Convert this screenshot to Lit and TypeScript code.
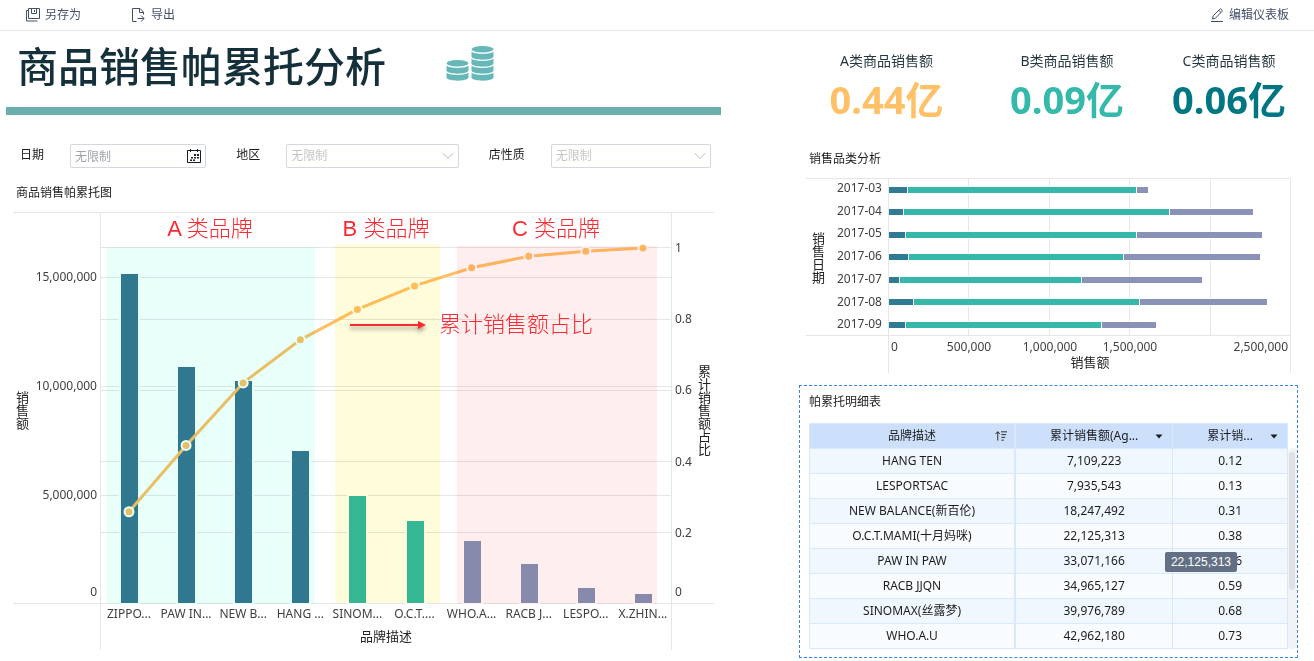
import { LitElement, html, svg, css } from "lit";
import { customElement, property } from "lit/decorators.js";
import { classMap } from "lit/directives/class-map.js";

const baseText = css`
  :host {
    display: block;
    box-sizing: border-box;
    font-family: "Noto Sans", "Noto Sans CJK SC", sans-serif;
    font-size: 12px;
    line-height: 16px;
    color: #1c1c1c;
  }
  * {
    box-sizing: border-box;
  }
  svg {
    display: block;
  }
`;

const chartText = css`
  .chart {
    width: 100%;
    height: auto;
  }
  .grid {
    stroke: #e6e6e6;
    stroke-width: 1;
    shape-rendering: crispEdges;
  }
  .tick {
    font-size: 12px;
    fill: #404040;
  }
  .axis-title {
    font-size: 13px;
    fill: #222;
  }
  .end {
    text-anchor: end;
  }
  .middle {
    text-anchor: middle;
  }
  .vertical {
    writing-mode: vertical-rl;
    text-anchor: middle;
  }
`;

type Brand = { label: string; sales: number; kind: "a" | "b" | "c" };

const brands: Brand[] = [
  { label: "ZIPPO...", sales: 15220000, kind: "a" },
  { label: "PAW IN...", sales: 10945853, kind: "a" },
  { label: "NEW B...", sales: 10311949, kind: "a" },
  { label: "HANG ...", sales: 7109223, kind: "a" },
  { label: "SINOM...", sales: 5011662, kind: "b" },
  { label: "O.C.T....", sales: 3877821, kind: "b" },
  { label: "WHO.A...", sales: 2985391, kind: "c" },
  { label: "RACB J...", sales: 1893961, kind: "c" },
  { label: "LESPO...", sales: 826320, kind: "c" },
  { label: "X.ZHIN...", sales: 550000, kind: "c" },
];

/* Bars for each brand with the running share of total sales above them. */
@customElement("pareto-chart")
class ParetoChart extends LitElement {
  @property({ attribute: false }) data: Brand[] = [];

  static styles = [
    baseText,
    chartText,
    css`
      .bar {
        stroke: #fff;
        stroke-width: 2;
      }
      .bar.a {
        fill: #337892;
      }
      .bar.b {
        fill: #34b9aa;
      }
      .bar.c {
        fill: #8894b8;
      }
      .share {
        fill: none;
        stroke: #ffbf66;
        stroke-width: 3;
      }
      .dot {
        fill: #ffbf66;
        stroke: #fff;
        stroke-width: 2;
      }
      .zone {
        mix-blend-mode: multiply;
      }
      .zone.a {
        fill: #e8fffa;
      }
      .zone.b {
        fill: #fffcdb;
      }
      .zone.c {
        fill: #ffeeee;
      }
      .note {
        font-family: "Liberation Sans", "Noto Sans CJK SC", sans-serif;
        font-size: 22px;
        font-weight: 300;
        fill: #fb2a32;
      }
      .arrow {
        fill: #fb2a32;
        filter: drop-shadow(0 3px 2px rgba(0, 0, 0, 0.4));
      }
    `,
  ];

  render() {
    const left = 95;
    const base = 392;
    const step = 57.1;
    const barY = (v: number) => base - (v / 5000000) * 109;
    const shareY = (v: number) => base - v * 356;
    const total = this.data.reduce((s, d) => s + d.sales, 0);
    let sum = 0;
    const points = this.data.map((d, i) => {
      sum += d.sales;
      return [left + 28 + i * step, shareY(sum / total)];
    });
    const line = (y: number) =>
      svg`<line class="grid" x1="95" x2="665" y1=${Math.round(y) + 0.5} y2=${Math.round(y) + 0.5}></line>`;

    return html`<svg class="chart" viewBox="0 0 715 445" role="img" aria-label="商品销售帕累托图">
      ${[5, 10, 15].map((m) => line(barY(m * 1000000)))}
      ${[0.2, 0.4, 0.6, 0.8, 1].map((v) => line(shareY(v) - 0.6))}
      <path class="grid" d="M7 .5H708M7 391.5H708M94.500 0V438M665.500 0V438" fill="none"></path>
      ${this.data.map((d, i) => {
        const y = Math.round(barY(d.sales) + 0.6);
        return svg`<rect class="bar ${d.kind}" x=${Math.round(left + 19 + i * step)} y=${y}
          width="19" height=${base - y}></rect>`;
      })}
      <polyline class="share" points=${points.map((p) => p.join(",")).join(" ")}></polyline>
      ${points.map((p) => svg`<circle class="dot" cx=${p[0]} cy=${p[1]} r="4.5"></circle>`)}
      <rect class="zone a" x="101" y="35" width="208" height="357"></rect>
      <rect class="zone b" x="329" y="32" width="105" height="359"></rect>
      <rect class="zone c" x="451" y="34" width="200" height="358"></rect>

      ${[0, 5000000, 10000000, 15000000].map(
        (v) => svg`<text class="tick end" x="91" y=${v ? barY(v) : 380} dy="4">${v.toLocaleString("en-US")}</text>`
      )}
      ${[0, 0.2, 0.4, 0.6, 0.8, 1].map(
        (v) => svg`<text class="tick" x="669" y=${v ? shareY(v) : 380} dy="4">${v}</text>`
      )}
      ${this.data.map(
        (d, i) => svg`<text class="tick middle" x=${left + 28 + i * step} y="406">${d.label}</text>`
      )}
      <text class="axis-title middle" x="380" y="429">品牌描述</text>
      <text class="axis-title vertical" x="16" y="198">销售额</text>
      <text class="axis-title vertical" x="698" y="198">累计销售额占比</text>

      <text class="note middle" x="204" y="24">A 类品牌</text>
      <text class="note middle" x="380" y="24">B 类品牌</text>
      <text class="note middle" x="550" y="24">C 类品牌</text>
      <text class="note" x="433" y="120">累计销售额占比</text>
      <path class="arrow" d="M344 112H412V109L420 113L412 117V114H344Z"></path>
    </svg>`;
  }
}

type Month = { label: string; parts: number[] };

const months: Month[] = [
  { label: "2017-03", parts: [119000, 1414000, 76000] },
  { label: "2017-04", parts: [94000, 1645000, 527000] },
  { label: "2017-05", parts: [106000, 1428000, 788000] },
  { label: "2017-06", parts: [125000, 1330000, 854000] },
  { label: "2017-07", parts: [68000, 1127000, 753000] },
  { label: "2017-08", parts: [156000, 1396000, 801000] },
  { label: "2017-09", parts: [106000, 1212000, 340000] },
];

/* Stacked horizontal bars, one row for each month. */
@customElement("category-chart")
class CategoryChart extends LitElement {
  @property({ attribute: false }) data: Month[] = [];

  static styles = [
    baseText,
    chartText,
    css`
      .gap {
        fill: #fff;
      }
      .p0 {
        fill: #317a93;
      }
      .p1 {
        fill: #35b8aa;
      }
      .p2 {
        fill: #8b92b8;
      }
    `,
  ];

  render() {
    const left = 90;
    const x = (v: number) => Math.round(left + (v / 500000) * 80.4);
    const row = (i: number) => 9 + Math.round(i * 22.5 - 0.1);
    return html`<svg class="chart" viewBox="0 0 499 197" role="img" aria-label="销售品类分析">
      ${[1, 2, 3, 4].map(
        (n) => svg`<line class="grid" x1=${x(n * 500000) - 0.5} x2=${x(n * 500000) - 0.5} y1="0" y2="157"></line>`
      )}
      <path class="grid" d="M7 .5H492M7 157.500H492M89.500 0V195M491.500 0V195" fill="none"></path>
      ${this.data.map((d, i) => {
        let sum = 0;
        const y = row(i);
        return svg`
          <rect class="gap" x=${left} y=${y - 1} width=${x(d.parts.reduce((a, b) => a + b)) - left + 1} height="8"></rect>
          ${d.parts.map((p, k) => {
            const start = x(sum) + (k === 2 ? 1 : 0);
            sum += p;
            const stop = x(sum) - (k === 0 ? 1 : 0);
            return svg`<rect class="p${k}" x=${start} y=${y} width=${stop - start} height="6"></rect>`;
          })}
          <text class="tick end" x="83" y=${14 + Math.round(i * 22.7)}>${d.label}</text>`;
      })}
      <text class="tick" x="92" y="173">0</text>
      ${[500000, 1000000, 1500000].map(
        (v) => svg`<text class="tick middle" x=${x(v)} y="173">${v.toLocaleString("en-US")}</text>`
      )}
      <text class="tick end" x="489" y="173">2,500,000</text>
      <text class="axis-title middle" x="291" y="189">销售额</text>
      <text class="axis-title vertical" x="19" y="80">销售日期</text>
    </svg>`;
  }
}

const rows = [
  ["HANG TEN", "7,109,223", "0.12"],
  ["LESPORTSAC", "7,935,543", "0.13"],
  ["NEW BALANCE(新百伦)", "18,247,492", "0.31"],
  ["O.C.T.MAMI(十月妈咪)", "22,125,313", "0.38"],
  ["PAW IN PAW", "33,071,166", "0.56"],
  ["RACB JJQN", "34,965,127", "0.59"],
  ["SINOMAX(丝露梦)", "39,976,789", "0.68"],
  ["WHO.A.U", "42,962,180", "0.73"],
];

/* Brand table in its selected frame, with a scroll bar and a value tooltip. */
@customElement("detail-table")
class DetailTable extends LitElement {
  static styles = [
    baseText,
    css`
      .panel {
        position: relative;
        border: 1px dashed #3d83e6;
        padding: 8px 0 8px 9px;
      }
      .title {
        margin: 0 0 13px;
        font-size: 12px;
        font-weight: 400;
      }
      .body {
        display: flex;
      }
      .table {
        flex: 1;
        table-layout: fixed;
        border-collapse: collapse;
        text-align: center;
      }
      .c1 {
        width: 43%;
      }
      .c2 {
        width: 33%;
      }
      .c3 {
        width: 24%;
      }
      .cell {
        height: 25px;
        padding: 0;
        border: 1px solid #d8e9fe;
        font-weight: 400;
        white-space: nowrap;
      }
      .first {
        border-right-width: 2px;
      }
      .head {
        background: #cce0fc;
      }
      .row {
        background: #f9fcff;
      }
      .row.odd {
        background: #f1f7fe;
      }
      .head-box {
        display: grid;
        grid-template-columns: 12px 1fr 12px;
        align-items: center;
        padding: 0 7px;
      }
      .tool {
        display: flex;
        justify-content: center;
        padding: 0;
        border: 0;
        background: none;
        color: inherit;
      }
      .track {
        width: 9px;
        margin-top: 25px;
        padding: 4px 2px 0 1px;
        border-radius: 4px;
        background: #f2f3f4;
      }
      .thumb {
        height: 138px;
        border-radius: 3px;
        background: #dfe1e4;
      }
      .tip {
        position: absolute;
        top: 166px;
        right: 60px;
        padding: 0 6px;
        border-radius: 2px;
        background: #626f85;
        color: #fff;
        font-family: "Liberation Sans", sans-serif;
        line-height: 20px;
      }
    `,
  ];

  private menu(name: string) {
    return html`<button class="tool" type="button" aria-label=${name}>
      <svg width="8" height="5" viewBox="0 0 8 5"><path d="M.5 .5h7L4 4.500z" fill="currentColor"></path></svg>
    </button>`;
  }

  render() {
    return html`<section class="panel">
      <h2 class="title">帕累托明细表</h2>
      <div class="body">
        <table class="table">
          <colgroup>
            <col class="c1" />
            <col class="c2" />
            <col class="c3" />
          </colgroup>
          <thead>
            <tr class="head">
              <th class="cell first" scope="col">
                <div class="head-box">
                  <span></span><span>品牌描述</span>
                  <button class="tool" type="button" aria-label="排序">
                    <svg width="13" height="12" viewBox="0 0 13 12" fill="none" stroke="currentColor">
                      <path d="M3 11V1.500M.6 4L3 1.300L5.400 4M6.500 1.500H13M7 4.500H12M7 7.500H11M7 10.500H9.500"></path>
                    </svg>
                  </button>
                </div>
              </th>
              <th class="cell" scope="col">
                <div class="head-box"><span></span><span>累计销售额(Ag...</span>${this.menu("累计销售额")}</div>
              </th>
              <th class="cell" scope="col">
                <div class="head-box"><span></span><span>累计销...</span>${this.menu("累计销售额占比")}</div>
              </th>
            </tr>
          </thead>
          <tbody>
            ${rows.map(
              (r, i) => html`<tr class=${classMap({ row: true, odd: i % 2 === 0 })}>
                <td class="cell first">${r[0]}</td>
                <td class="cell">${r[1]}</td>
                <td class="cell">${r[2]}</td>
              </tr>`
            )}
          </tbody>
        </table>
        <div class="track"><div class="thumb"></div></div>
      </div>
      <div class="tip" role="tooltip">22,125,313</div>
    </section>`;
  }
}

@customElement("app-root")
class AppRoot extends LitElement {
  static styles = [
    baseText,
    css`
      :host {
        background: #fff;
      }
      .bar {
        display: flex;
        align-items: center;
        height: 31px;
        padding: 0 25px 0 25px;
        border-bottom: 1px solid #e8e8e8;
      }
      .action {
        display: flex;
        align-items: center;
        gap: 5px;
        margin-right: 50px;
        padding: 0;
        border: 0;
        background: none;
        font: inherit;
        color: #434f6b;
        cursor: pointer;
      }
      .action.edit {
        margin: 0 0 0 auto;
      }
      .columns {
        display: grid;
        grid-template-columns: 715fr 499fr;
        gap: 78px;
        padding: 0 16px 0 6px;
      }
      .hero {
        display: flex;
        gap: 60px;
        height: 84px;
        padding: 5px 0 0 11px;
        border-bottom: 8px solid #6aafae;
      }
      .name {
        margin: 0;
        font-size: 41px;
        font-weight: 500;
        line-height: 60px;
        color: #15303a;
      }
      .coins {
        margin-top: 10px;
      }
      .filters {
        display: flex;
        align-items: center;
        gap: 30px;
        margin-top: 29px;
        padding: 0 10px 0 14px;
      }
      .filter {
        display: flex;
        align-items: center;
        gap: 26px;
      }
      .filter.date {
        flex: 136 1 50px;
      }
      .filter.area {
        flex: 172 1 50px;
      }
      .filter.shop {
        flex: 160 1 62px;
      }
      .label {
        flex: none;
        margin-bottom: 2px;
      }
      .box {
        display: grid;
        flex: 1;
        align-items: center;
        min-width: 0;
      }
      .box > * {
        grid-area: 1 / 1;
      }
      .field {
        width: 100%;
        height: 24px;
        min-width: 0;
        padding: 0 4px;
        border: 1px solid #d3d8de;
        border-radius: 2px;
        background: #fff;
        font: inherit;
        color: #c6c6c6;
        appearance: none;
      }
      .field::placeholder {
        color: #a0a4aa;
        opacity: 1;
      }
      .glyph {
        justify-self: end;
        margin-right: 5px;
        pointer-events: none;
      }
      .subtitle {
        margin: 17px 10px 11px;
        font-size: 12px;
        font-weight: 400;
      }
      .kpis {
        display: grid;
        grid-template-columns: 175fr 186fr 138fr;
        margin: 20px 0 27px;
        text-align: center;
      }
      .kpi {
        margin: 0;
      }
      .kpi-name {
        font-size: 14px;
        line-height: 20px;
        color: #26383f;
      }
      .kpi-value {
        margin: 3px 0 0;
        font-size: 38px;
        font-weight: 700;
        line-height: 50px;
        white-space: nowrap;
      }
      .kpi-value.a {
        color: #ffc168;
      }
      .kpi-value.b {
        color: #35b9ab;
      }
      .kpi-value.c {
        color: #007682;
      }
      .table {
        margin-top: 10px;
      }
    `,
  ];

  private chevron() {
    return html`<svg class="glyph" width="12" height="8" viewBox="0 0 12 8" fill="none" stroke="#bcc0c4">
      <path d="M.7 1L6 6.500L11.300 1"></path>
    </svg>`;
  }

  private kpi(name: string, value: string, kind: string) {
    return html`<dl class="kpi">
      <dt class="kpi-name">${name}</dt>
      <dd class="kpi-value ${kind}">${value}</dd>
    </dl>`;
  }

  render() {
    return html`
      <header class="bar">
        <button class="action" type="button">
          <svg width="15" height="14" viewBox="0 0 15 14" fill="none" stroke="currentColor">
            <path d="M3.500 .5H14.500V10.500H3.500ZM6.500 .5V5.500H11.500V.5M9.500 2V4M3.500 2.500H1.500V13H12.500"></path>
          </svg>
          另存为
        </button>
        <button class="action" type="button">
          <svg width="15" height="15" viewBox="0 0 15 15" fill="none" stroke="currentColor">
            <path d="M5.500 13.500H1.500V.5H9L12.500 4.200V6.500M8.500 .5V4.500H12.500M6.500 10.500H13M10 7.500L13 10.500L10 13.700"></path>
          </svg>
          导出
        </button>
        <button class="action edit" type="button">
          <svg width="14" height="14" viewBox="0 0 14 14" fill="none" stroke="currentColor">
            <path d="M2.500 11L3.200 7.800L9.800 1.200Q10.500 .5 11.300 1.200L12 2Q12.600 2.700 12 3.400L5.400 10.200ZM8.800 2.200L11 4.500M1 13.500H13"></path>
          </svg>
          编辑仪表板
        </button>
      </header>
      <main class="columns">
        <div>
          <div class="hero">
            <h1 class="name">商品销售帕累托分析</h1>
            <svg class="coins" width="48" height="36" viewBox="0 0 48 36" aria-hidden="true" fill="#65b7b8">
              <ellipse cx="36.500" cy="3.200" rx="11" ry="3.200"></ellipse>
              <ellipse cx="11.500" cy="17.200" rx="11" ry="3.200"></ellipse>
              ${[5.5, 12.5, 19.5, 26.5].map(
                (y) => svg`<path d="M25.500 ${y}c2 3.200 20 3.200 22 0v5c-1 4.200-21 4.200-22 0z"></path>`
              )}
              ${[19.5, 26.5].map(
                (y) => svg`<path d="M.5 ${y}c2 3.200 20 3.200 22 0v5c-1 4.200-21 4.200-22 0z"></path>`
              )}
            </svg>
          </div>
          <div class="filters">
            <div class="filter date">
              <label class="label" for="date">日期</label>
              <div class="box">
                <input class="field" id="date" type="text" placeholder="无限制" />
                <svg class="glyph" width="14" height="14" viewBox="0 0 14 14" fill="none" stroke="#1b1b2b">
                  <path d="M.5 1.500H13.500V13.500H.5ZM3.500 0V3M10.500 0V3"></path>
                  <path
                    d="M7 5h2v2H7zM10 5h2v2H10zM4 8h2v1.500H4zM7 8h2v1.500H7zM10 8h2v1.500H10zM3 10.500h2v1.500H3zM6 10.500h2v1.500H6z"
                    fill="#1b1b2b"
                    stroke="none"
                  ></path>
                </svg>
              </div>
            </div>
            <div class="filter area">
              <label class="label" for="area">地区</label>
              <div class="box">
                <select class="field" id="area"><option>无限制</option></select>
                ${this.chevron()}
              </div>
            </div>
            <div class="filter shop">
              <label class="label" for="shop">店性质</label>
              <div class="box">
                <select class="field" id="shop"><option>无限制</option></select>
                ${this.chevron()}
              </div>
            </div>
          </div>
          <h2 class="subtitle">商品销售帕累托图</h2>
          <pareto-chart .data=${brands}></pareto-chart>
        </div>
        <div>
          <div class="kpis">
            ${this.kpi("A类商品销售额", "0.44亿", "a")} ${this.kpi("B类商品销售额", "0.09亿", "b")}
            ${this.kpi("C类商品销售额", "0.06亿", "c")}
          </div>
          <h2 class="subtitle">销售品类分析</h2>
          <category-chart .data=${months}></category-chart>
          <detail-table class="table"></detail-table>
        </div>
      </main>
    `;
  }
}
